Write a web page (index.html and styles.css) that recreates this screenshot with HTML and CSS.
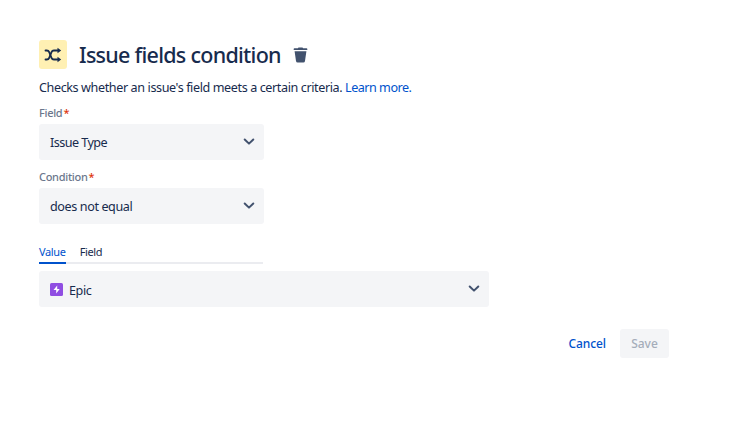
FILE: index.html
```
<!DOCTYPE html>
<html lang="en">
<head>
    <meta charset="UTF-8">
    <meta name="viewport" content="width=device-width, initial-scale=1.0">
    <title>Issue fields condition</title>
    <link rel="stylesheet" href="styles.css">
</head>
<body>
    <div class="container">
        <div class="header">
            <div class="header-icon">
                <svg width="18" height="16" viewBox="0 0 18 16" fill="none" stroke="#172b4d" stroke-width="1.8" stroke-linecap="round">
                    <path d="M1.500 3.500h1.300c1.300 0 1.900.5 2.400 1.700l2.300 5.600c.5 1.200 1.100 1.700 2.400 1.700H14"/>
                    <path d="M1.500 12.500h1.300c1.300 0 1.900-.5 2.400-1.700l2.300-5.600c.5-1.200 1.100-1.700 2.400-1.700H14"/>
                    <path d="M13.500 .8l3.700 2.700-3.700 2.700zM13.500 9.800l3.700 2.700-3.700 2.700z" fill="#172b4d" stroke="none"/>
                </svg>
            </div>
            <h1 class="title">Issue fields condition</h1>
            <button class="delete">
                <svg width="15" height="16" viewBox="0 0 15 16" fill="#42526e">
                    <path d="M5 1.200q0-.7.7-.7h3.600q.7 0 .7.7h3.600q.7 0 .7.7v1.200H.7V1.900q0-.7.7-.7z"/>
                    <path d="M1.600 4.200h11.800L12 14q-.2 1.500-1.700 1.500H4.700Q3.200 15.500 3 14z"/>
                </svg>
            </button>
        </div>
        <p class="desc">Checks whether an issue's field meets a certain criteria. <a class="link" href="#">Learn more.</a></p>

        <label class="label label-field">Field<span class="required">*</span></label>
        <div class="select">
            <span class="select-text type-text">Issue Type</span>
            <svg class="arrow" width="12" height="8" viewBox="0 0 12 8"><path d="M1.700 1.500L6 5.600l4.300-4.100"/></svg>
        </div>

        <label class="label label-condition">Condition<span class="required">*</span></label>
        <div class="select">
            <span class="select-text">does not equal</span>
            <svg class="arrow" width="12" height="8" viewBox="0 0 12 8"><path d="M1.700 1.500L6 5.600l4.300-4.100"/></svg>
        </div>

        <div class="tabs">
            <div class="tab active">Value</div>
            <div class="tab">Field</div>
        </div>
        <div class="select select-wide">
            <svg class="epic" width="13" height="13" viewBox="0 0 13 13">
                <rect width="13" height="13" rx="1.500" fill="#904ee2"/>
                <path d="M7.200 2.500L3.500 7h2.700v3.500L9.700 6H7.200z" fill="#fff"/>
            </svg>
            <span class="select-text epic-text">Epic</span>
            <svg class="arrow" width="12" height="8" viewBox="0 0 12 8"><path d="M1.700 1.500L6 5.600l4.300-4.100"/></svg>
        </div>

        <div class="footer">
            <button class="btn cancel">Cancel</button>
            <button class="btn save" disabled>Save</button>
        </div>
    </div>
</body>
</html>
```
FILE: styles.css
```
* {
    margin: 0;
    padding: 0;
    box-sizing: border-box;
}

body {
    background: #fff;
    color: #172b4d;
    font-family: "Noto Sans", "Open Sans", sans-serif;
    font-size: 13px;
}

.container {
    width: 669px;
    padding: 40px 0 0 39px;
    white-space: nowrap;
}

.header {
    display: flex;
    align-items: center;
    height: 29px;
}

.header-icon {
    display: flex;
    align-items: center;
    justify-content: center;
    width: 28px;
    height: 29px;
    margin-right: 12px;
    background: #fff0b3;
    border-radius: 3px;
}

.title {
    width: 202px;
    font-size: 21.5px;
    font-weight: 500;
    line-height: 29px;
    letter-spacing: -0.73px;
}

.delete {
    display: flex;
    margin-left: 12px;
    border: none;
    background: none;
    cursor: pointer;
}

.desc {
    height: 17px;
    margin-top: 10px;
    font-size: 12.6px;
    line-height: 18px;
    letter-spacing: -0.4px;
}

.link {
    color: #0052cc;
    letter-spacing: -0.5px;
    text-decoration: none;
}

.label {
    display: block;
    height: 16px;
    color: #6b778c;
    font-size: 11px;
    font-weight: 500;
    line-height: 16px;
    letter-spacing: -0.3px;
}

.label-field,
.label-condition {
    margin: 9px 0 3px;
}

.required {
    margin-left: 1px;
    color: #de350b;
}

.select {
    display: flex;
    align-items: center;
    width: 225px;
    height: 36px;
    padding: 0 9px 0 11px;
    background: #f4f5f7;
    border-radius: 3px;
    cursor: pointer;
}

.select-wide {
    width: 450px;
    margin-top: 7px;
}

.select-text {
    font-size: 12.6px;
    letter-spacing: -0.4px;
}

.type-text {
    letter-spacing: -0.55px;
}

.epic-text {
    padding-top: 2px;
}

.arrow {
    margin-left: auto;
    fill: none;
    stroke: #42526e;
    stroke-width: 2;
    stroke-linecap: round;
    stroke-linejoin: round;
}

.epic {
    margin-right: 6px;
}

.tabs {
    display: flex;
    gap: 14px;
    width: 224px;
    height: 24px;
    margin-top: 16px;
    border-bottom: 2px solid #ebecf0;
    font-size: 11px;
    line-height: 24px;
    letter-spacing: -0.35px;
}

.tab {
    height: 24px;
}

.active {
    color: #0052cc;
    border-bottom: 2px solid #0052cc;
}

.footer {
    display: flex;
    justify-content: flex-end;
    margin-top: 22px;
}

.btn {
    height: 29px;
    border: none;
    border-radius: 3px;
    font-family: inherit;
    font-size: 12px;
    font-weight: 500;
}

.cancel {
    margin-right: 14px;
    background: none;
    color: #0052cc;
    letter-spacing: -0.1px;
}

.save {
    width: 49px;
    background: #f4f5f7;
    color: #a5adba;
}
```
